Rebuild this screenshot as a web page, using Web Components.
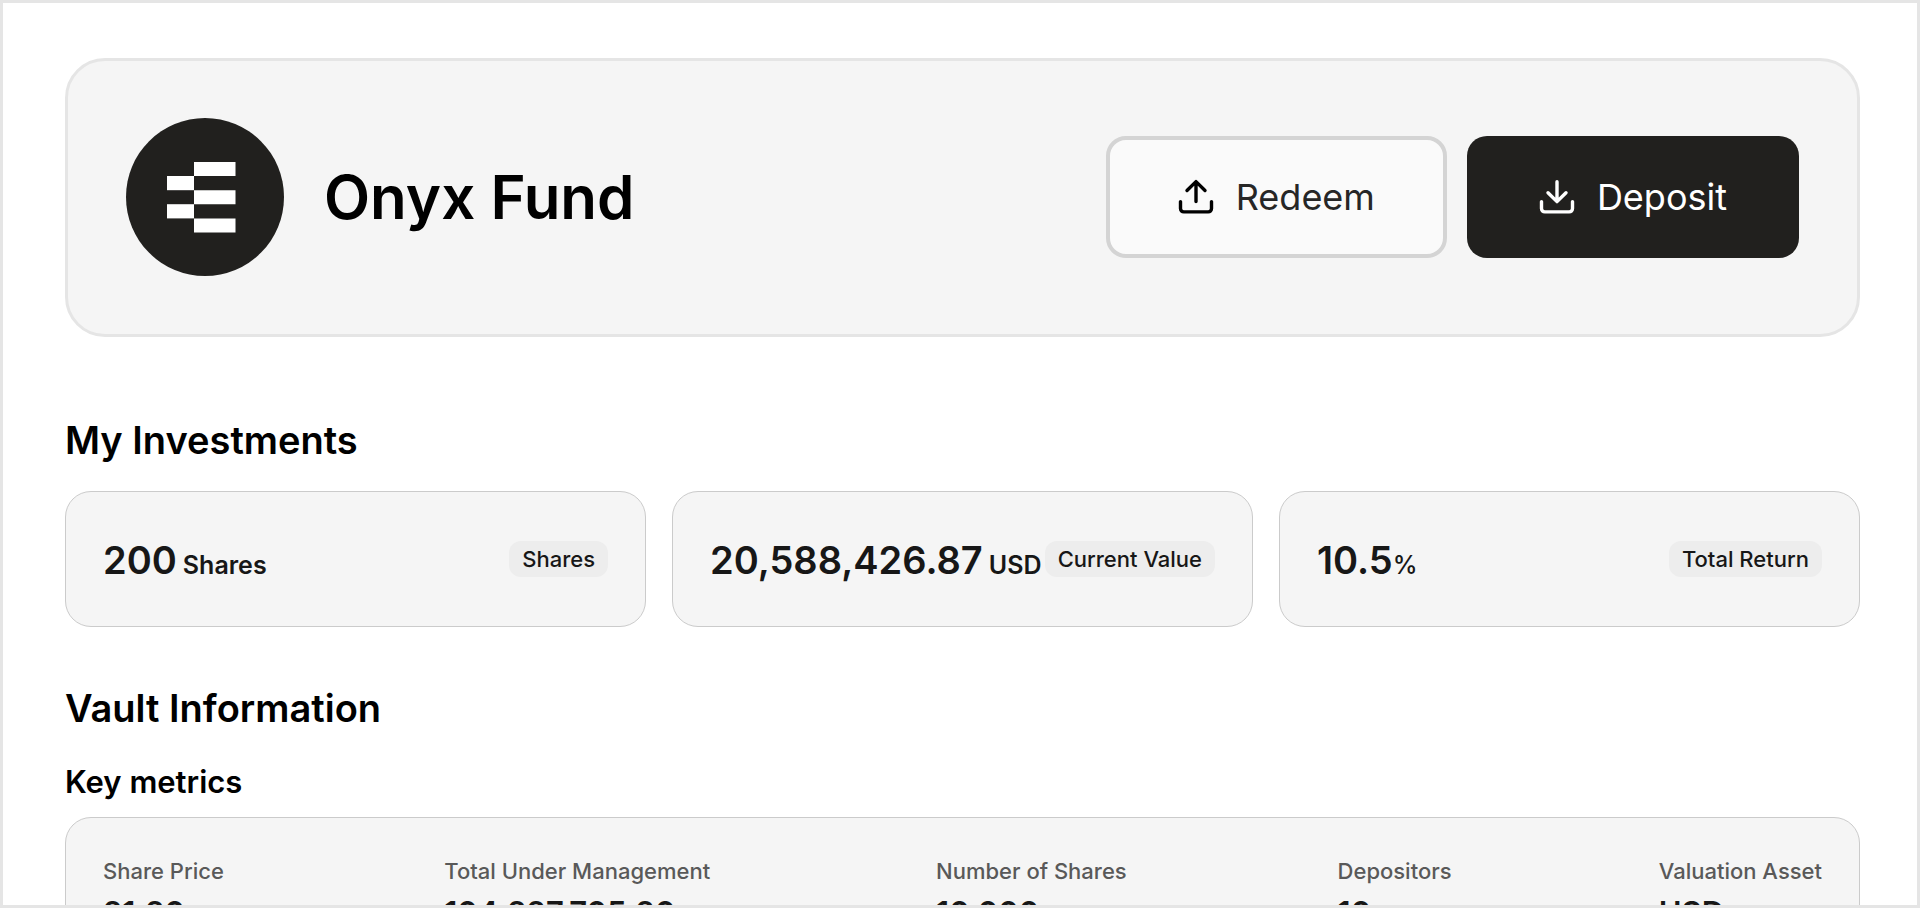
<!DOCTYPE html>
<html lang="en">
<head>
<meta charset="utf-8">
<title>Onyx Fund</title>
<style>
  html {
    height: 100%;
  }
  body {
    margin: 0;
    height: 100%;
    font-family: Inter, "Liberation Sans", sans-serif;
    color: #000;
    background: #fff;
  }
</style>
</head>
<body>
<fund-page>
  <fund-header name="Onyx Fund">
    <fund-button icon="upload">Redeem</fund-button>
    <fund-button icon="download" primary>Deposit</fund-button>
  </fund-header>

  <fund-section heading="My Investments">
    <stat-row>
      <stat-card value="200" unit="Shares" spaced>Shares</stat-card>
      <stat-card value="20,588,426.87" unit="USD" spaced>Current Value</stat-card>
      <stat-card value="10.5" unit="%">Total Return</stat-card>
    </stat-row>
  </fund-section>

  <fund-section heading="Vault Information" subheading="Key metrics">
    <metric-panel>
      <metric-item label="Share Price">21.20</metric-item>
      <metric-item label="Total Under Management">104,227,705.20</metric-item>
      <metric-item label="Number of Shares">10,000</metric-item>
      <metric-item label="Depositors">10</metric-item>
      <metric-item label="Valuation Asset">USD</metric-item>
    </metric-panel>
  </fund-section>
</fund-page>

<script>
// Small base class: every element renders its own shadow root once connected
class FundElement extends HTMLElement {
  constructor() {
    super();
    this.attachShadow({ mode: 'open' });
  }

  connectedCallback() {
    this.shadowRoot.innerHTML = this.render();
  }
}

// Outer frame, cuts off what does not fit the window
class FundPage extends FundElement {
  render() {
    return `
      <style>
        :host {
          display: block;
          box-sizing: border-box;
          height: 100%;
          overflow: hidden;
          border: 3px solid #e5e5e5;
        }
        main {
          display: flex;
          flex-direction: column;
          padding: 55px 57px 0 62px;
        }
      </style>
      <main><slot></slot></main>
    `;
  }
}

class FundLogo extends FundElement {
  render() {
    return `
      <style>
        :host { display: block; flex: none; }
        svg { display: block; width: 158px; height: 158px; }
      </style>
      <svg viewBox="0 0 158 158" aria-hidden="true">
        <circle cx="79" cy="79" r="79" fill="#21201e"/>
        <g fill="#fff">
          <path d="M68 44h41.500v14H68z"/>
          <path d="M41 58h27v14.200H41z"/>
          <path d="M68 72.200h41.500v14H68z"/>
          <path d="M41 86.200h27v14.200H41z"/>
          <path d="M68 100.400h41.500v14H68z"/>
        </g>
      </svg>
    `;
  }
}

class FundHeader extends FundElement {
  render() {
    return `
      <style>
        :host { display: block; }
        header {
          display: flex;
          align-items: center;
          justify-content: space-between;
          padding: 57px 58px 58px;
          background: #f5f5f5;
          border: 3px solid #e5e5e5;
          border-radius: 40px;
        }
        .brand {
          display: flex;
          align-items: center;
          gap: 40px;
        }
        h1 {
          margin: 0;
          font-size: 60px;
          line-height: 72px;
          font-weight: 600;
        }
        .actions {
          display: flex;
          gap: 20px;
        }
      </style>
      <header>
        <div class="brand">
          <fund-logo></fund-logo>
          <h1>${this.getAttribute('name')}</h1>
        </div>
        <div class="actions"><slot></slot></div>
      </header>
    `;
  }
}

const ARROWS = {
  upload: 'M18 22.600V2.700M9 11.500l9-8.900 9 8.900',
  download: 'M18 2.700V22.600M9 13.700l9 8.900 9-8.900'
};

class FundButton extends FundElement {
  render() {
    return `
      <style>
        :host { display: block; }
        button {
          display: flex;
          align-items: center;
          gap: 22px;
          height: 122px;
          padding: 0 68px;
          font: 400 36px/44px Inter, "Liberation Sans", sans-serif;
          color: #262626;
          background: #fafafa;
          border: 4px solid #d4d4d4;
          border-radius: 20px;
        }
        :host([primary]) button {
          padding: 0 72px;
          color: #fff;
          background: #21201e;
          border: 0;
        }
        svg {
          width: 36px;
          height: 36px;
          fill: none;
          stroke: #000;
          stroke-width: 3.400;
          stroke-linecap: round;
          stroke-linejoin: round;
        }
        :host([primary]) svg { stroke: #fff; }
      </style>
      <button type="button">
        <svg viewBox="0 0 36 36" aria-hidden="true">
          <path d="${ARROWS[this.getAttribute('icon')]}"/>
          <path d="M2.500 22.600v7a3.300 3.300 0 0 0 3.300 3.300h24.400a3.300 3.300 0 0 0 3.300-3.300v-7"/>
        </svg>
        <span><slot></slot></span>
      </button>
    `;
  }
}

class FundSection extends FundElement {
  render() {
    const sub = this.getAttribute('subheading');
    return `
      <style>
        :host { display: block; margin-top: 79px; }
        :host([subheading]) { margin-top: 57px; }
        h2 {
          margin: 0 0 27px;
          font-size: 38px;
          line-height: 48px;
          font-weight: 600;
        }
        :host([subheading]) h2 { margin-bottom: 30px; }
        h3 {
          margin: 0 0 15px;
          font-size: 31px;
          line-height: 40px;
          font-weight: 600;
        }
      </style>
      <section>
        <h2>${this.getAttribute('heading')}</h2>
        ${sub ? `<h3>${sub}</h3>` : ''}
        <slot></slot>
      </section>
    `;
  }
}

class StatRow extends FundElement {
  render() {
    return `
      <style>
        :host {
          display: grid;
          grid-template-columns: repeat(3, minmax(0, 1fr));
          gap: 26px;
        }
      </style>
      <slot></slot>
    `;
  }
}

class StatCard extends FundElement {
  render() {
    return `
      <style>
        :host {
          display: flex;
          align-items: center;
          justify-content: space-between;
          box-sizing: border-box;
          min-height: 136px;
          padding: 0 37px;
          color: #171717;
          background: #f5f5f5;
          border: 1px solid #cbcbcb;
          border-radius: 26px;
          white-space: nowrap;
        }
        .figure {
          display: flex;
          align-items: baseline;
          padding-top: 6px;
          font-size: 38px;
          line-height: 48px;
          font-weight: 600;
        }
        .unit { font-size: 25px; }
        :host([unit="%"]) .unit { font-weight: 500; }
        :host([spaced]) .figure { gap: 6px; }
        .badge {
          padding: 4px 13px;
          font-size: 22px;
          line-height: 28px;
          font-weight: 500;
          background: #ededed;
          border-radius: 12px;
        }
      </style>
      <div class="figure">
        <span>${this.getAttribute('value')}</span>
        <span class="unit">${this.getAttribute('unit')}</span>
      </div>
      <span class="badge"><slot></slot></span>
    `;
  }
}

class MetricPanel extends FundElement {
  render() {
    return `
      <style>
        :host {
          display: grid;
          grid-template-columns: 34fr 49fr 40fr 32fr auto;
          padding: 37px;
          background: #f5f5f5;
          border: 1px solid #cbcbcb;
          border-radius: 26px;
        }
      </style>
      <slot></slot>
    `;
  }
}

class MetricItem extends FundElement {
  render() {
    return `
      <style>
        :host {
          display: flex;
          flex-direction: column;
          gap: 6px;
        }
        .label {
          font-size: 22px;
          line-height: 32px;
          font-weight: 500;
          color: #595959;
        }
        .value {
          font-size: 31px;
          line-height: 40px;
          font-weight: 600;
          color: #171717;
        }
      </style>
      <span class="label">${this.getAttribute('label')}</span>
      <span class="value"><slot></slot></span>
    `;
  }
}

customElements.define('fund-page', FundPage);
customElements.define('fund-logo', FundLogo);
customElements.define('fund-header', FundHeader);
customElements.define('fund-button', FundButton);
customElements.define('fund-section', FundSection);
customElements.define('stat-row', StatRow);
customElements.define('stat-card', StatCard);
customElements.define('metric-panel', MetricPanel);
customElements.define('metric-item', MetricItem);
</script>
</body>
</html>
